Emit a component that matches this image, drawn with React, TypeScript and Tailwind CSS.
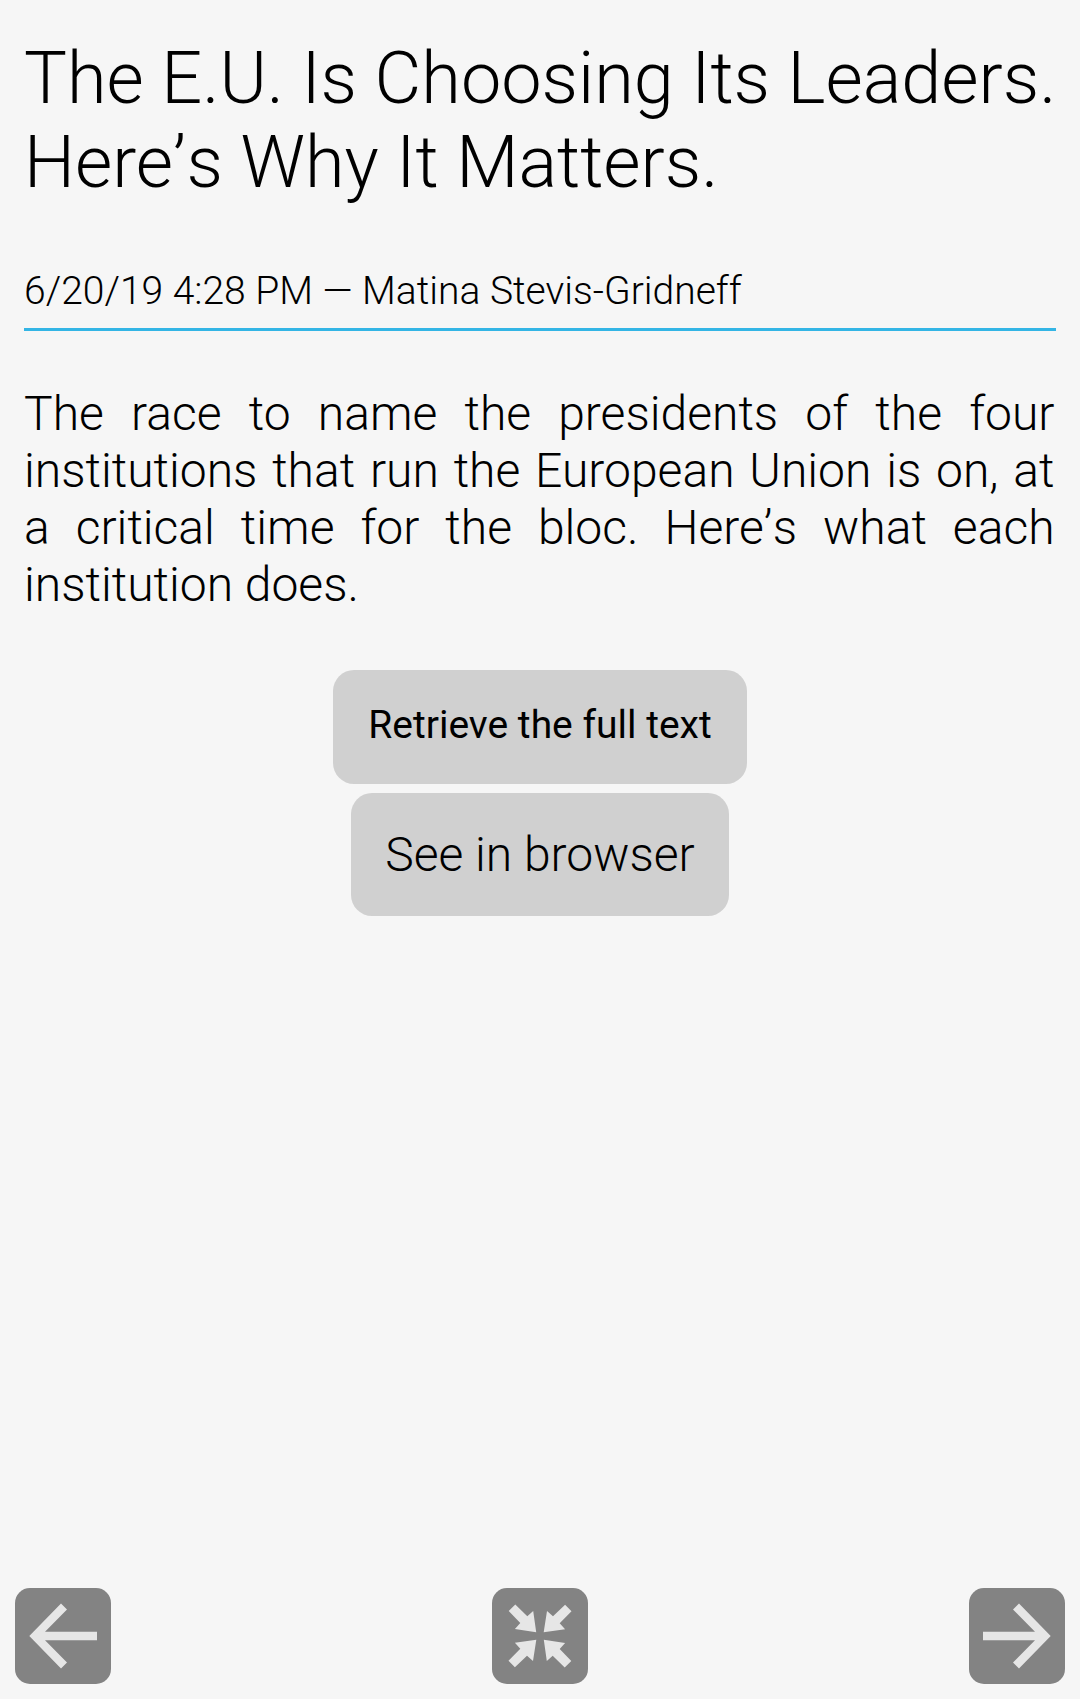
import React from "react";

function NavButton({ children, label }: { children: React.ReactNode; label: string }) {
  return (
    <button aria-label={label} className="h-24 w-24 rounded-[15px] bg-[#838383]">
      <svg viewBox="0 0 96 96" className="h-24 w-24" fill="#e6e6e6">{children}</svg>
    </button>
  );
}

const ARROW = "M14.3 48 L46 15.5 L52 21.4 L30 43.7 H82 V52.3 H30 L52 74.6 L46 80.5 Z";

function Inward({ angle }: { angle: number }) {
  return (
    <path
      transform={`rotate(${angle} 48 48)`}
      d="M16.7 22.9 L23.3 16.5 L35.3 28.3 L41.2 22.9 L44.2 44.3 L22.9 41 L28.3 35 Z"
    />
  );
}

function Apostrophe() {
  return <span className="tracking-[0.01em]">’</span>;
}

export default function App() {
  return (
    <div className="flex h-[1699px] w-[1080px] flex-col bg-[#f6f6f6] font-['Roboto',sans-serif] font-light text-black">
      <main className="flex-1 px-6 pt-[37px]">
        <h1 className="text-[72px] leading-[84px] tracking-[-0.02px] whitespace-nowrap">
          The E.U. Is Choosing Its Leaders.
          <br />
          Here<Apostrophe />s Why It Matters.
        </h1>
        <p className="mt-[60px] h-[66px] border-b-[3px] border-[#33b5e5] pt-[3px] text-[39px] leading-[46px] whitespace-nowrap">
          6/20/19 4:28 PM — Matina Stevis-Gridneff
        </p>
        <p className="mt-[54px] pr-[1.5px] text-justify text-[48px] leading-[57px]">
          The race to name the presidents of the four institutions that run the European Union is on, at a critical time for the bloc. Here<Apostrophe />s what each institution does.
        </p>
        <div className="mt-[57px] flex flex-col items-center gap-[9px]">
          <button className="h-[114px] w-[414px] rounded-[21px] bg-[#d0d0d0] pb-[3px] text-[39px] font-normal">Retrieve the full text</button>
          <button className="h-[123px] w-[378px] rounded-[21px] bg-[#d0d0d0] text-[48px]">See in browser</button>
        </div>
      </main>
      <nav className="flex justify-between px-[15px] pb-[15px]">
        <NavButton label="Previous">
          <path d={ARROW} />
        </NavButton>
        <NavButton label="Exit full screen">
          <Inward angle={0} />
          <Inward angle={90} />
          <Inward angle={180} />
          <Inward angle={270} />
        </NavButton>
        <NavButton label="Next">
          <path d={ARROW} transform="rotate(180 48 48)" />
        </NavButton>
      </nav>
    </div>
  );
}
